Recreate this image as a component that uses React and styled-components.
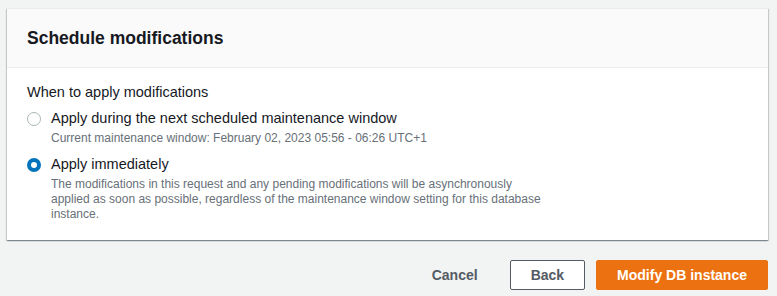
import React from 'react'
import styled, { createGlobalStyle, css } from 'styled-components'

const GlobalStyle = createGlobalStyle`
  html, body {
    margin: 0;
    padding: 0;
    background: #f2f3f3;
    font-family: "Liberation Sans", Arial, sans-serif;
    color: #16191f;
  }
`

const Page = styled.div`
  padding: 8px 9px 8px 7px;
  display: flex;
  flex-direction: column;
  gap: 20px;
`

const Card = styled.div`
  background: #ffffff;
  border-top: 1px solid #eaeded;
  box-shadow: 0 1px 1px 0 rgba(0, 28, 36, 0.3), 1px 1px 1px 0 rgba(0, 28, 36, 0.15),
    -1px 1px 1px 0 rgba(0, 28, 36, 0.15);
`

const Header = styled.div`
  background: #fafafa;
  border-bottom: 1px solid #eaeded;
  padding: 18px 20px 18px 20px;
`

const Title = styled.h2`
  margin: 0;
  font-size: 17.5px;
  line-height: 22px;
  font-weight: 700;
  color: #16191f;
`

const Body = styled.div`
  padding: 13px 20px 18px 20px;
`

const Label = styled.div`
  font-size: 14.5px;
  line-height: 22px;
  color: #16191f;
  margin-bottom: 4px;
`

const Options = styled.div`
  display: flex;
  flex-direction: column;
  gap: 7px;
`

const Option = styled.label`
  display: grid;
  grid-template-columns: 16px 1fr;
  column-gap: 8px;
  align-items: start;
`

const Radio = styled.span`
  width: 14px;
  height: 14px;
  margin-top: 5px;
  border-radius: 50%;
  box-sizing: border-box;
  ${({ checked }) =>
    checked
      ? css`
          border: 4px solid #0073bb;
          background: #ffffff;
        `
      : css`
          border: 1px solid #aab7b8;
          background: #ffffff;
        `}
`

const OptionText = styled.div`
  display: flex;
  flex-direction: column;
`

const OptionTitle = styled.span`
  font-size: 14.5px;
  line-height: 22px;
  color: #16191f;
`

const OptionDesc = styled.span`
  font-size: 12px;
  line-height: 15px;
  margin-top: 2px;
  color: #687078;
  max-width: 500px;
`

const Actions = styled.div`
  display: flex;
  justify-content: flex-end;
  align-items: center;
  gap: 11px;
`

const Button = styled.button`
  font-family: inherit;
  font-size: 14px;
  font-weight: 700;
  line-height: 22px;
  height: 30px;
  padding: 3px 20px;
  border-radius: 2px;
  box-sizing: border-box;
  cursor: pointer;
  ${({ variant }) =>
    variant === 'primary'
      ? css`
          background: #ec7211;
          border: 1px solid #ec7211;
          color: #ffffff;
        `
      : variant === 'link'
      ? css`
          background: transparent;
          border: 1px solid transparent;
          color: #545b64;
        `
      : css`
          background: #ffffff;
          border: 1px solid #545b64;
          color: #545b64;
        `}
`

const options = [
  {
    title: 'Apply during the next scheduled maintenance window',
    desc: 'Current maintenance window: February 02, 2023 05:56 - 06:26 UTC+1',
    checked: false,
  },
  {
    title: 'Apply immediately',
    desc:
      'The modifications in this request and any pending modifications will be asynchronously applied as soon as possible, regardless of the maintenance window setting for this database instance.',
    checked: true,
  },
]

export default function App() {
  return (
    <>
      <GlobalStyle />
      <Page>
        <Card>
          <Header>
            <Title>Schedule modifications</Title>
          </Header>
          <Body>
            <Label>When to apply modifications</Label>
            <Options>
              {options.map((o) => (
                <Option key={o.title}>
                  <Radio checked={o.checked} />
                  <OptionText>
                    <OptionTitle>{o.title}</OptionTitle>
                    <OptionDesc>{o.desc}</OptionDesc>
                  </OptionText>
                </Option>
              ))}
            </Options>
          </Body>
        </Card>
        <Actions>
          <Button variant="link">Cancel</Button>
          <Button>Back</Button>
          <Button variant="primary">Modify DB instance</Button>
        </Actions>
      </Page>
    </>
  )
}
